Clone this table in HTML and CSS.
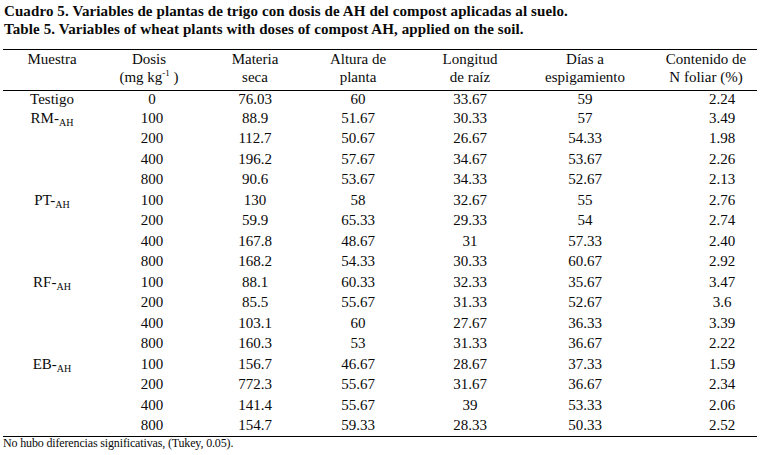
FILE: index.html
```html
<!DOCTYPE html>
<html>
<head>
<meta charset="utf-8">
<title>Cuadro 5</title>
<link rel="stylesheet" href="styles.css">
</head>
<body>
<div class="page">
  <div class="caption">
    <div>Cuadro 5. Variables de plantas de trigo con dosis de AH del compost aplicadas al suelo.</div>
    <div>Table 5. Variables of wheat plants with doses of compost AH, applied on the soil.</div>
  </div>
  <table class="data">
    <colgroup>
      <col class="c1"><col class="c2"><col class="c3"><col class="c4"><col class="c5"><col class="c6"><col class="c7">
    </colgroup>
    <thead>
      <tr>
        <th>Muestra</th>
        <th class="dose">Dosis<br>(mg kg<sup>-1</sup> )</th>
        <th>Materia<br>seca</th>
        <th>Altura de<br>planta</th>
        <th>Longitud<br>de raíz</th>
        <th>Días a<br>espigamiento</th>
        <th class="last">Contenido de<br>N foliar (%)</th>
      </tr>
    </thead>
    <tbody>
      <tr class="first"><td>Testigo</td><td>0</td><td>76.03</td><td>60</td><td>33.67</td><td>59</td><td class="last">2.24</td></tr>
      <tr><td>RM-<sub>AH</sub></td><td>100</td><td>88.9</td><td>51.67</td><td>30.33</td><td>57</td><td class="last">3.49</td></tr>
      <tr><td></td><td>200</td><td>112.7</td><td>50.67</td><td>26.67</td><td>54.33</td><td class="last">1.98</td></tr>
      <tr><td></td><td>400</td><td>196.2</td><td>57.67</td><td>34.67</td><td>53.67</td><td class="last">2.26</td></tr>
      <tr><td></td><td>800</td><td>90.6</td><td>53.67</td><td>34.33</td><td>52.67</td><td class="last">2.13</td></tr>
      <tr><td>PT-<sub>AH</sub></td><td>100</td><td>130</td><td>58</td><td>32.67</td><td>55</td><td class="last">2.76</td></tr>
      <tr><td></td><td>200</td><td>59.9</td><td>65.33</td><td>29.33</td><td>54</td><td class="last">2.74</td></tr>
      <tr><td></td><td>400</td><td>167.8</td><td>48.67</td><td>31</td><td>57.33</td><td class="last">2.40</td></tr>
      <tr><td></td><td>800</td><td>168.2</td><td>54.33</td><td>30.33</td><td>60.67</td><td class="last">2.92</td></tr>
      <tr><td>RF-<sub>AH</sub></td><td>100</td><td>88.1</td><td>60.33</td><td>32.33</td><td>35.67</td><td class="last">3.47</td></tr>
      <tr><td></td><td>200</td><td>85.5</td><td>55.67</td><td>31.33</td><td>52.67</td><td class="last">3.6</td></tr>
      <tr><td></td><td>400</td><td>103.1</td><td>60</td><td>27.67</td><td>36.33</td><td class="last">3.39</td></tr>
      <tr><td></td><td>800</td><td>160.3</td><td>53</td><td>31.33</td><td>36.67</td><td class="last">2.22</td></tr>
      <tr><td>EB-<sub>AH</sub></td><td>100</td><td>156.7</td><td>46.67</td><td>28.67</td><td>37.33</td><td class="last">1.59</td></tr>
      <tr><td></td><td>200</td><td>772.3</td><td>55.67</td><td>31.67</td><td>36.67</td><td class="last">2.34</td></tr>
      <tr><td></td><td>400</td><td>141.4</td><td>55.67</td><td>39</td><td>53.33</td><td class="last">2.06</td></tr>
      <tr><td></td><td>800</td><td>154.7</td><td>59.33</td><td>28.33</td><td>50.33</td><td class="last">2.52</td></tr>
    </tbody>
  </table>
  <div class="note">No hubo diferencias significativas, (Tukey, 0.05).</div>
</div>
</body>
</html>
```

FILE: styles.css
```css
html, body {
  margin: 0;
  padding: 0;
  background: #ffffff;
}
body {
  font-family: "Liberation Serif", "Times New Roman", serif;
  color: #0a0a0a;
}
.page {
  padding: 3px 3px 0 3px;
}
.caption {
  font-weight: bold;
  font-size: 15px;
  line-height: 17.5px;
  letter-spacing: 0.1px;
  padding-left: 1px;
}
.data {
  margin-top: 11px;
  width: 100%;
  table-layout: fixed;
  border-collapse: collapse;
  font-size: 15px;
}
.c1 { width: 98px; }
.c2 { width: 102px; }
.c3 { width: 104px; }
.c4 { width: 102px; }
.c5 { width: 122px; }
.c6 { width: 108px; }
.c7 { width: 118px; }
.data thead tr {
  border-top: 1px solid #000;
  border-bottom: 1px solid #000;
}
.data th {
  font-weight: normal;
  text-align: center;
  vertical-align: top;
  line-height: 18px;
  padding: 0 0 4px 0;
}
.data th.dose {
  padding-right: 6px;
}
.data th.last {
  padding-left: 16px;
}
.data td {
  text-align: center;
  line-height: 20.5px;
  height: 20.5px;
  padding: 0;
  white-space: nowrap;
}
.data tr.first td {
  line-height: 16.6px;
  height: 16.6px;
}
.data td.last {
  padding-left: 48px;
}
.data tbody tr:last-child {
  border-bottom: 1px solid #000;
}
.data sup {
  font-size: 9px;
  line-height: 0;
  vertical-align: 6px;
}
.data sub {
  font-size: 10px;
  line-height: 0;
  vertical-align: -3px;
}
.note {
  font-size: 12px;
  line-height: 13px;
  letter-spacing: -0.15px;
}
```
